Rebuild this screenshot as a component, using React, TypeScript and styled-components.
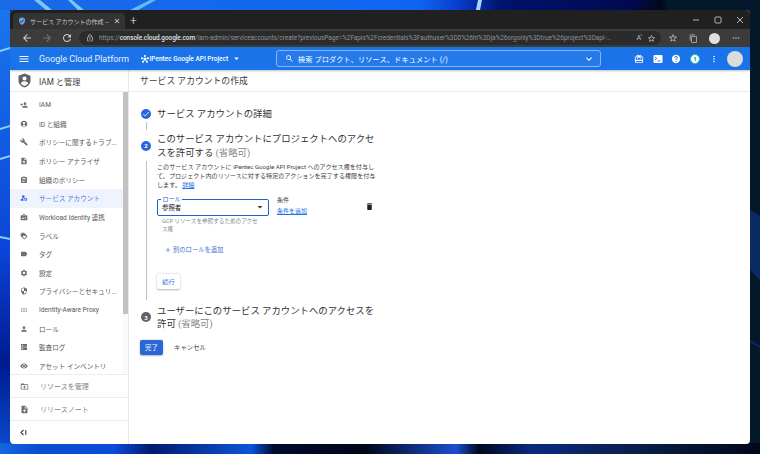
import styled, { createGlobalStyle } from 'styled-components'
import {
  MdAccountCircle,
  MdAdd,
  MdArrowBack,
  MdArrowForward,
  MdBuild,
  MdCheck,
  MdClose,
  MdContentCopy,
  MdDelete,
  MdDns,
  MdExpandMore,
  MdHelp,
  MdLabel,
  MdLockOutline,
  MdLoyalty,
  MdMenu,
  MdMoreHoriz,
  MdMoreVert,
  MdNoteAdd,
  MdPersonAdd,
  MdRefresh,
  MdSearch,
  MdSecurity,
  MdSettings,
  MdStarBorder,
  MdViewCompact,
  MdVisibility,
  MdBadge,
  MdAssignment,
  MdManageAccounts,
  MdVerifiedUser,
  MdPerson,
  MdHub,
  MdArrowDropDown,
  MdRedeem,
  MdDriveFolderUpload,
  MdPlagiarism,
} from 'react-icons/md'

const jaFont = `Roboto, "Noto Sans CJK JP", sans-serif`

const GlobalStyle = createGlobalStyle`
  html, body {
    margin: 0;
    padding: 0;
    width: 760px;
    height: 454px;
    overflow: hidden;
  }
  * {
    box-sizing: border-box;
  }
`

// Desktop

const Desktop = styled.div`
  position: relative;
  width: 760px;
  height: 454px;
  padding: 10px;
  overflow: hidden;
  background: #04182c;
  font-family: ${jaFont};
`

const WallpaperSvg = styled.svg`
  position: absolute;
  inset: 0;
`

const Window = styled.div`
  position: relative;
  width: 739.5px;
  height: 433.5px;
  display: flex;
  flex-direction: column;
  border-radius: 4px;
  overflow: hidden;
  background: #fff;
`

// Browser chrome

const TabStrip = styled.div`
  height: 19px;
  background: #202020;
  display: flex;
  align-items: flex-end;
  padding-left: 3px;
  color: #e6e6e6;
`

const Tab = styled.div`
  width: 112px;
  height: 16px;
  background: #333;
  border-radius: 4px 4px 0 0;
  display: flex;
  align-items: center;
  padding: 0 4px 0 5px;
  gap: 4px;
  font-size: 6px;
  white-space: nowrap;
`

const TabTitle = styled.span`
  flex: 1;
  overflow: hidden;
  color: #c8c8c8;
`

const NewTab = styled.div`
  margin: 0 0 1px 1px;
  height: 15px;
  width: 15px;
  display: flex;
  align-items: center;
  justify-content: center;
  font-size: 12px;
  font-weight: 300;
`

const WindowControls = styled.div`
  margin-left: auto;
  height: 19px;
  display: flex;
  align-items: center;
  gap: 12px;
  padding-right: 5px;
`

const ControlIcon = styled.svg`
  width: 10px;
  height: 10px;
  fill: none;
  stroke: #c4c4c4;
  stroke-width: 0.9;
`

const Toolbar = styled.div`
  height: 18px;
  background: #3b3b3b;
  display: flex;
  align-items: center;
  padding-left: 7px;
  color: #c0c0c0;
  font-size: 11px;
`

const NavButton = styled.span<{ $dim?: boolean }>`
  width: 21px;
  display: flex;
  justify-content: center;
  margin-left: -1px;
  color: ${(p) => (p.$dim ? '#777' : '#d0d0d0')};
  font-size: 12px;
`

const AddressBar = styled.div`
  margin-left: 2px;
  width: 582px;
  height: 14px;
  background: #2b2b2b;
  border-radius: 7px;
  display: flex;
  align-items: center;
  padding: 0 5px 0 7px;
  gap: 5px;
  font-size: 6.4px;
  white-space: nowrap;
  color: #929292;
`

const UrlText = styled.span`
  flex: 1;
  overflow: hidden;
  letter-spacing: -0.01px;

  b {
    color: #e4e4e4;
    font-weight: 500;
  }
`

const ReadAloud = styled.span`
  color: #b8b8b8;
  font-size: 7px;
  margin-left: 3px;
`

const ToolbarEnd = styled.div`
  flex: 1;
  display: flex;
  align-items: center;
  justify-content: space-around;
  padding: 0 3px 0 1px;
`

const ProfileDot = styled.span`
  width: 11px;
  height: 11px;
  border-radius: 50%;
  background: #e0e0e0;
`

// Cloud console header

const ConsoleHeader = styled.header`
  height: 23px;
  background: #1a73e8;
  display: flex;
  align-items: center;
  color: #fff;
  padding-left: 8px;
  box-shadow: 0 1px 2px rgba(0, 0, 0, 0.25);
  z-index: 1;
`

const Brand = styled.span`
  margin-left: 9px;
  width: 102px;
  font-size: 8.9px;
  letter-spacing: 0.02px;
  white-space: nowrap;
  color: #e8f0fe;
`

const ProjectPicker = styled.span`
  display: flex;
  align-items: center;
  gap: 0.5px;
  width: 135px;
  font-size: 6.5px;
  font-weight: 500;
  white-space: nowrap;

  svg:last-child {
    margin-left: 2px;
  }
`

const SearchBox = styled.div`
  width: 325px;
  height: 17px;
  border: 1px solid #8ab4f8;
  border-radius: 3px;
  background: rgba(255, 255, 255, 0.05);
  display: flex;
  align-items: center;
  padding: 0 5px 0 8px;
  gap: 4px;
  font-size: 7.2px;
  white-space: nowrap;
`

const SearchText = styled.span`
  flex: 1;
  letter-spacing: 0.1px;
`

const HeaderIcons = styled.div`
  display: flex;
  align-items: center;
  margin-left: 33px;
  gap: 8.7px;
  font-size: 10px;
`

const ShellIcon = styled.svg`
  width: 10px;
  height: 10px;
`

const NotificationBadge = styled.span`
  width: 10px;
  height: 10px;
  border-radius: 50%;
  border: 1.5px solid #1ec9a0;
  background: #fff;
  color: #1a73e8;
  font-size: 6px;
  font-weight: 700;
  display: flex;
  align-items: center;
  justify-content: center;
`

const Avatar = styled.span`
  width: 16px;
  height: 16px;
  border-radius: 50%;
  background: #dcdcdc;
`

// Body

const ConsoleBody = styled.div`
  flex: 1;
  min-height: 0;
  display: flex;
`

const Sidebar = styled.aside`
  width: 119px;
  border-right: 1px solid #e8e8e8;
  display: flex;
  flex-direction: column;
  color: #3c4043;
`

const SidebarHead = styled.div`
  height: 22px;
  display: flex;
  align-items: center;
  padding-left: 8px;
  gap: 8px;
  font-size: 8.2px;
  border-bottom: 1px solid #ececec;
  color: #3c4043;
`

const ShieldBadge = styled.svg`
  width: 13px;
  height: 15px;
  flex: none;
`

const NavArea = styled.div`
  height: 282px;
  display: flex;
`

const NavList = styled.nav`
  flex: 1;
  padding-top: 3.6px;
`

const NavRow = styled.div<{ $active?: boolean }>`
  height: 18.67px;
  display: flex;
  align-items: center;
  padding-left: 10px;
  gap: 11px;
  font-size: 6.6px;
  white-space: nowrap;
  background: ${(p) => (p.$active ? '#eef3fd' : 'transparent')};
  color: ${(p) => (p.$active ? '#4a7bdc' : '#55585b')};

  svg {
    flex: none;
    font-size: 8px;
    color: ${(p) => (p.$active ? '#2f6bdc' : '#6b6f73')};
  }
`

const ScrollTrack = styled.div`
  width: 5px;
  background: #fafafa;
`

const ScrollThumb = styled.div`
  height: 222px;
  background: #c2c2c2;
`

const SidebarFoot = styled.div<{ $muted?: boolean }>`
  height: 23px;
  display: flex;
  align-items: center;
  padding-left: 10px;
  gap: 11px;
  border-top: 1px solid #ececec;
  font-size: 7px;
  color: ${(p) => (p.$muted ? '#80868b' : '#3c4043')};

  svg {
    font-size: 9px;
    color: #6b6f73;
  }
`

const CollapseFoot = styled(SidebarFoot)`
  flex: 1;
`

const CollapseIcon = styled.svg`
  width: 7px;
  height: 7px;
  fill: none;
  stroke: #3c4043;
  stroke-width: 1.1;
`

const Main = styled.main`
  flex: 1;
  display: flex;
  flex-direction: column;
  min-width: 0;
`

const PageBar = styled.div`
  height: 22px;
  border-bottom: 1px solid #ececec;
  display: flex;
  align-items: center;
  padding-left: 11px;
  font-size: 8.8px;
  color: #3c4043;
`

const Wizard = styled.div`
  padding: 15px 0 0 12px;
  width: 270px;
  color: #3c4043;
`

const StepHead = styled.div`
  display: flex;
  align-items: center;
  gap: 6px;
`

const StepMarker = styled.span<{ $color: string }>`
  flex: none;
  width: 10px;
  height: 10px;
  border-radius: 50%;
  background: ${(p) => p.$color};
  color: #fff;
  display: flex;
  align-items: center;
  justify-content: center;
  font-size: 6px;
  font-weight: 700;
`

const StepTitle = styled.h2`
  margin: 0;
  max-width: 220px;
  font-size: 9.4px;
  line-height: 13.3px;
  font-weight: 400;
  color: #303134;
`

const Optional = styled.span`
  color: #80868b;
`

const Connector = styled.div`
  width: 1px;
  height: 8px;
  background: #bdc1c6;
  margin: 2px 0 2px 4.5px;
`

const StepBody = styled.div`
  margin: 2px 0 4px 4.5px;
  border-left: 1px solid #bdc1c6;
  padding: 1px 0 0 10.5px;
  height: 139px;
`

const StepText = styled.p`
  margin: 0;
  width: 224px;
  font-size: 6.1px;
  line-height: 9.3px;
  color: #3c4043;
`

const TextLink = styled.a`
  color: #1a73e8;
  text-decoration: underline;
`

const RoleRow = styled.div`
  display: flex;
  margin-top: 5px;
`

const RoleField = styled.div`
  width: 112px;
`

const RoleSelect = styled.div`
  position: relative;
  height: 17px;
  margin-top: 4px;
  border: 1.5px solid #1a62d0;
  border-radius: 2px;
  display: flex;
  align-items: center;
  justify-content: space-between;
  padding: 0 2px 0 4px;
  font-size: 6.4px;
  color: #202124;

  svg {
    font-size: 12px;
    color: #3c4043;
  }
`

const FloatLabel = styled.label`
  position: absolute;
  top: -4.5px;
  left: 3px;
  padding: 0 1.5px;
  background: #fff;
  font-size: 6px;
  line-height: 7px;
  color: #1a62d0;
`

const HelpText = styled.div`
  width: 100px;
  margin: 1px 0 0 5px;
  font-size: 5.6px;
  line-height: 8px;
  color: #80868b;
`

const Condition = styled.div`
  margin: 1px 0 0 8px;
  width: 82px;
  font-size: 6px;
  line-height: 8px;

  p {
    margin: 0 0 3px;
  }
`

const TrashButton = styled.span`
  margin: 7px 0 0 6px;
  font-size: 9px;
  color: #202124;
`

const AddRole = styled.div`
  margin: 12.5px 0 0 7px;
  display: flex;
  align-items: center;
  gap: 1px;
  font-size: 6.3px;
  color: #3b6fd4;

  svg {
    font-size: 8px;
  }
`

const OutlineButton = styled.button`
  margin-top: 20px;
  display: block;
  width: 23px;
  height: 15px;
  padding: 0;
  border: 0;
  border-radius: 2px;
  background: #fff;
  box-shadow: 0 0.5px 2px rgba(60, 64, 67, 0.4);
  font-family: inherit;
  font-size: 6.2px;
  color: #3b6fd4;
`

const Actions = styled.div`
  display: flex;
  align-items: center;
  margin: 9.5px 0 0 -1px;
  gap: 11px;
`

const PrimaryButton = styled.button`
  width: 23px;
  height: 15px;
  padding: 0;
  border: 0;
  border-radius: 2px;
  background: #2b66d9;
  box-shadow: 0 0.5px 2px rgba(60, 64, 67, 0.4);
  font-family: inherit;
  font-size: 6.4px;
  color: #fff;
`

const TextButton = styled.span`
  font-size: 6.4px;
  color: #3c4043;
`

// Data

const navItems = [
  { label: 'IAM', Icon: MdPersonAdd },
  { label: 'ID と組織', Icon: MdAccountCircle },
  { label: 'ポリシーに関するトラブ...', Icon: MdBuild },
  { label: 'ポリシー アナライザ', Icon: MdPlagiarism },
  { label: '組織のポリシー', Icon: MdAssignment },
  { label: 'サービス アカウント', Icon: MdManageAccounts, active: true },
  { label: 'Workload Identity 連携', Icon: MdBadge },
  { label: 'ラベル', Icon: MdLoyalty },
  { label: 'タグ', Icon: MdLabel },
  { label: '設定', Icon: MdSettings },
  { label: 'プライバシーとセキュリ...', Icon: MdSecurity },
  { label: 'Identity-Aware Proxy', Icon: MdViewCompact },
  { label: 'ロール', Icon: MdPerson },
  { label: '監査ログ', Icon: MdDns },
  { label: 'アセット インベントリ', Icon: MdVisibility },
]

const url = (
  <>
    https://<b>console.cloud.google.com</b>
    /iam-admin/serviceaccounts/create?previousPage=%2Fapis%2Fcredentials%3Fauthuser%3D0%26hl%3Dja%26orgonly%3Dtrue%26project%3Dapi-...
  </>
)

function Wallpaper() {
  return (
    <WallpaperSvg width="760" height="454" viewBox="0 0 760 454">
      <defs>
        <linearGradient id="left" x1="0" y1="0" x2="0" y2="1">
          <stop offset="0" stopColor="#1a78ee" />
          <stop offset="0.55" stopColor="#0b45d8" />
          <stop offset="0.8" stopColor="#001a90" />
          <stop offset="1" stopColor="#0a4fd0" />
        </linearGradient>
        <linearGradient id="top" x1="0" y1="0" x2="1" y2="0">
          <stop offset="0" stopColor="#1a6ae8" />
          <stop offset="0.55" stopColor="#0f66f0" />
          <stop offset="0.6" stopColor="#0a3fd0" />
          <stop offset="0.66" stopColor="#00126a" />
          <stop offset="0.83" stopColor="#000a50" />
          <stop offset="0.87" stopColor="#020818" />
          <stop offset="0.88" stopColor="#04182c" />
        </linearGradient>
        <linearGradient id="bottom" x1="0" y1="0" x2="1" y2="0">
          <stop offset="0" stopColor="#1466e0" />
          <stop offset="0.05" stopColor="#0a4ed0" />
          <stop offset="0.15" stopColor="#0c4ad8" />
          <stop offset="0.2" stopColor="#021a70" />
          <stop offset="0.33" stopColor="#0b55d8" />
          <stop offset="0.36" stopColor="#000a30" />
          <stop offset="0.48" stopColor="#000618" />
          <stop offset="0.6" stopColor="#1c4ed0" />
          <stop offset="0.63" stopColor="#000820" />
          <stop offset="0.7" stopColor="#0a2a80" />
          <stop offset="0.82" stopColor="#0a2050" />
          <stop offset="1" stopColor="#010818" />
        </linearGradient>
      </defs>
      <rect width="760" height="454" fill="#04182c" />
      <rect width="10" height="454" fill="url(#left)" />
      <rect width="760" height="10" fill="url(#top)" />
      <rect y="443" width="760" height="11" fill="url(#bottom)" />
      <path d="M34 0 L46 10 L52 10 L40 0Z M68 0 L78 10 L84 10 L72 0Z" fill="#7cc4fa" />
      <path d="M150 0 L130 10 L138 10 L156 0Z" fill="#6ab8fa" />
      <path d="M478 0 L476 10 L480 10 L482 0Z" fill="#a8d8ff" />
      <path d="M0 50 L10 47 L10 49 L0 52Z M0 128 L10 125 L10 127 L0 130Z M0 158 L10 155 L10 157 L0 160Z M0 236 L10 238 L10 240 L0 238Z" fill="#8fd0fa" />
      <path d="M750 210 L760 216 L760 280 L750 270Z M750 340 L760 346 L760 348 L750 342Z" fill="#0a2a66" />
    </WallpaperSvg>
  )
}

export default function App() {
  return (
    <>
      <GlobalStyle />
      <Desktop>
        <Wallpaper />
        <Window>
          <TabStrip>
            <Tab>
              <MdVerifiedUser size={8} color="#6f9ff0" />
              <TabTitle>サービス アカウントの作成 – IAM と管理</TabTitle>
              <MdClose size={8} />
            </Tab>
            <NewTab>+</NewTab>
            <WindowControls>
              <ControlIcon viewBox="0 0 10 10">
                <path d="M2 5h6" />
              </ControlIcon>
              <ControlIcon viewBox="0 0 10 10">
                <rect x="2" y="2" width="6" height="6" rx="1" />
              </ControlIcon>
              <ControlIcon viewBox="0 0 10 10">
                <path d="M2 2l6 6M8 2l-6 6" />
              </ControlIcon>
            </WindowControls>
          </TabStrip>

          <Toolbar>
            <NavButton>
              <MdArrowBack />
            </NavButton>
            <NavButton $dim>
              <MdArrowForward />
            </NavButton>
            <NavButton>
              <MdRefresh />
            </NavButton>
            <AddressBar>
              <MdLockOutline size={8} color="#d0d0d0" />
              <UrlText>{url}</UrlText>
              <ReadAloud>Aʼ</ReadAloud>
              <MdStarBorder size={9} color="#c8c8c8" />
            </AddressBar>
            <ToolbarEnd>
              <MdStarBorder size={10} />
              <MdContentCopy size={9} />
              <ProfileDot />
              <MdMoreHoriz size={10} />
            </ToolbarEnd>
          </Toolbar>

          <ConsoleHeader>
            <MdMenu size={12} />
            <Brand>Google Cloud Platform</Brand>
            <ProjectPicker>
              <MdHub size={8} />
              IPentec Google API Project
              <MdArrowDropDown size={11} />
            </ProjectPicker>
            <SearchBox>
              <MdSearch size={9} />
              <SearchText>検索 プロダクト、リソース、ドキュメント (/)</SearchText>
              <MdExpandMore size={12} />
            </SearchBox>
            <HeaderIcons>
              <MdRedeem />
              <ShellIcon viewBox="0 0 10 10">
                <rect x="0.5" y="1" width="9" height="8" rx="1" fill="#fff" />
                <path d="M2 3l1.800 1.500L2 6" fill="none" stroke="#1a73e8" strokeWidth="0.9" />
                <path d="M4.500 7h3" stroke="#1a73e8" strokeWidth="0.9" />
              </ShellIcon>
              <MdHelp />
              <NotificationBadge>1</NotificationBadge>
              <MdMoreVert />
              <Avatar />
            </HeaderIcons>
          </ConsoleHeader>

          <ConsoleBody>
            <Sidebar>
              <SidebarHead>
                <ShieldBadge viewBox="0 0 13 14">
                  <path d="M6.5 0L12.5 2.2V7c0 3.4-2.5 5.9-6 7-3.500-1.100-6-3.600-6-7V2.200Z" fill="#5f6368" />
                  <circle cx="6.500" cy="5" r="2" fill="#fff" />
                  <path d="M2.800 10c.6-1.600 2-2.300 3.700-2.300s3.100.7 3.700 2.300c-.9 1.100-2.200 1.900-3.700 2.400-1.500-.5-2.800-1.300-3.700-2.400Z" fill="#fff" />
                </ShieldBadge>
                IAM と管理
              </SidebarHead>
              <NavArea>
                <NavList>
                  {navItems.map(({ label, Icon, active }) => (
                    <NavRow key={label} $active={active}>
                      <Icon />
                      {label}
                    </NavRow>
                  ))}
                </NavList>
                <ScrollTrack>
                  <ScrollThumb />
                </ScrollTrack>
              </NavArea>
              <SidebarFoot $muted>
                <MdDriveFolderUpload />
                リソースを管理
              </SidebarFoot>
              <SidebarFoot $muted>
                <MdNoteAdd />
                リリースノート
              </SidebarFoot>
              <CollapseFoot>
                <CollapseIcon viewBox="0 0 7 7">
                  <path d="M3.500 1L1 3.500 3.500 6M5.800 1v5" />
                </CollapseIcon>
              </CollapseFoot>
            </Sidebar>

            <Main>
              <PageBar>サービス アカウントの作成</PageBar>
              <Wizard>
                <StepHead>
                  <StepMarker $color="#2b66d9">
                    <MdCheck size={8} />
                  </StepMarker>
                  <StepTitle>サービス アカウントの詳細</StepTitle>
                </StepHead>
                <Connector />
                <StepHead>
                  <StepMarker $color="#2b66d9">2</StepMarker>
                  <StepTitle>
                    このサービス アカウントにプロジェクトへのアクセスを許可する <Optional>(省略可)</Optional>
                  </StepTitle>
                </StepHead>
                <StepBody>
                  <StepText>
                    このサービス アカウントに iPentec Google API Project へのアクセス権を付与し
                    <br />
                    て、プロジェクト内のリソースに対する特定のアクションを完了する権限を付与
                    <br />
                    します。 <TextLink>詳細</TextLink>
                  </StepText>
                  <RoleRow>
                    <RoleField>
                      <RoleSelect>
                        <FloatLabel>ロール</FloatLabel>
                        参照者
                        <MdArrowDropDown />
                      </RoleSelect>
                      <HelpText>GCP リソースを参照するためのアクセス権</HelpText>
                    </RoleField>
                    <Condition>
                      <p>条件</p>
                      <TextLink>条件を追加</TextLink>
                    </Condition>
                    <TrashButton>
                      <MdDelete />
                    </TrashButton>
                  </RoleRow>
                  <AddRole>
                    <MdAdd />
                    別のロールを追加
                  </AddRole>
                  <OutlineButton>続行</OutlineButton>
                </StepBody>
                <StepHead>
                  <StepMarker $color="#5f6368">3</StepMarker>
                  <StepTitle>
                    ユーザーにこのサービス アカウントへのアクセスを許可 <Optional>(省略可)</Optional>
                  </StepTitle>
                </StepHead>
                <Actions>
                  <PrimaryButton>完了</PrimaryButton>
                  <TextButton>キャンセル</TextButton>
                </Actions>
              </Wizard>
            </Main>
          </ConsoleBody>
        </Window>
      </Desktop>
    </>
  )
}
